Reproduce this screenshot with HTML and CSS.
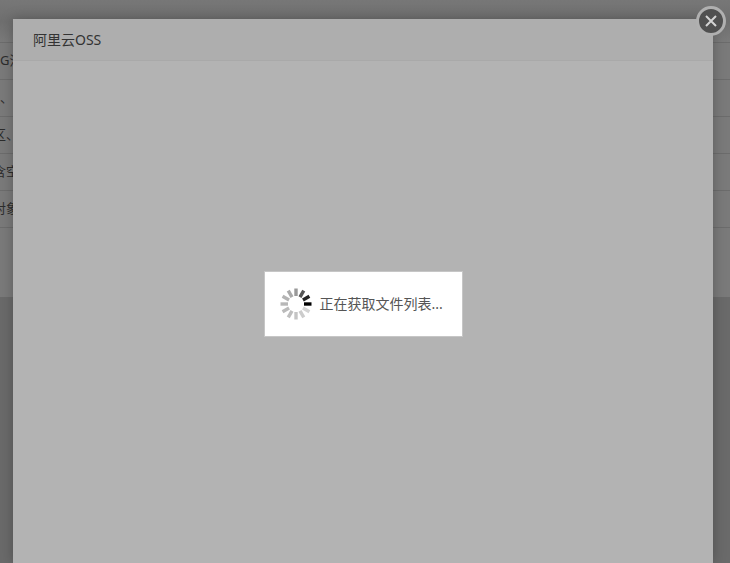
FILE: index.html
```html
<!DOCTYPE html>
<html lang="zh">
<head>
<meta charset="utf-8">
<title>阿里云OSS</title>
<link rel="stylesheet" href="styles.css">
</head>
<body>
<div class="backdrop">
  <div class="page-top">
    <div class="page-band"></div>
    <div class="page-row"><span>G流</span></div>
    <div class="page-row"><span>、</span></div>
    <div class="page-row"><span class="cut">区、</span></div>
    <div class="page-row"><span class="cut">含空</span></div>
    <div class="page-row"><span class="cut">对象</span></div>
  </div>
  <div class="page-bottom"></div>
</div>
<section class="modal">
  <header class="modal-head">阿里云OSS</header>
  <div class="modal-body">
    <div class="loader">
      <svg class="spinner" width="32" height="32" viewBox="0 0 32 32" aria-hidden="true">
        <g stroke-width="3.4" fill="none">
          <line x1="16" y1="0.5" x2="16" y2="8" stroke="#999" transform="rotate(0 16 16)"/>
          <line x1="16" y1="0.5" x2="16" y2="8" stroke="#555" transform="rotate(30 16 16)"/>
          <line x1="16" y1="0.5" x2="16" y2="8" stroke="#222" transform="rotate(60 16 16)"/>
          <line x1="16" y1="0.5" x2="16" y2="8" stroke="#000" transform="rotate(90 16 16)"/>
          <line x1="16" y1="0.5" x2="16" y2="8" stroke="#d4d4d4" transform="rotate(120 16 16)"/>
          <line x1="16" y1="0.5" x2="16" y2="8" stroke="#ccc" transform="rotate(150 16 16)"/>
          <line x1="16" y1="0.5" x2="16" y2="8" stroke="#c4c4c4" transform="rotate(180 16 16)"/>
          <line x1="16" y1="0.5" x2="16" y2="8" stroke="#bebebe" transform="rotate(210 16 16)"/>
          <line x1="16" y1="0.5" x2="16" y2="8" stroke="#bbb" transform="rotate(240 16 16)"/>
          <line x1="16" y1="0.5" x2="16" y2="8" stroke="#b8b8b8" transform="rotate(270 16 16)"/>
          <line x1="16" y1="0.5" x2="16" y2="8" stroke="#b4b4b4" transform="rotate(300 16 16)"/>
          <line x1="16" y1="0.5" x2="16" y2="8" stroke="#aaa" transform="rotate(330 16 16)"/>
        </g>
      </svg>
      <span class="loader-text">正在获取文件列表...</span>
    </div>
  </div>
</section>
<button class="close" type="button" aria-label="关闭">
  <svg width="14" height="14" viewBox="0 0 14 14" aria-hidden="true"><path d="M2 2 12 12M12 2 2 12" stroke="#d4d4d4" stroke-width="2" fill="none"/></svg>
</button>
</body>
</html>
```

FILE: styles.css
```css
* { box-sizing: border-box; }
html, body { margin: 0; height: 100%; overflow: hidden; }
body {
  position: relative;
  width: 730px;
  height: 563px;
  background: #666;
  font-family: "Noto Sans", "Noto Sans CJK SC", sans-serif;
  color: #333;
}
.backdrop { position: absolute; inset: 0; display: flex; flex-direction: column; }
.page-top { height: 297px; background: #7a7a7a; overflow: hidden; }
.page-bottom { flex: 1; background: #6a6a6a; }
.page-band { height: 43px; background: linear-gradient(#777, #6f6f6f 50%, #7a7a7a); border-bottom: 1px solid #6c6c6c; }
.page-row {
  height: 37px;
  border-bottom: 1px solid #6c6c6c;
  font-size: 13px;
  color: #2c2c2c;
  display: flex;
  align-items: center;
  padding-bottom: 3px;
  white-space: nowrap;
}
.cut { margin-left: -7px; }
.modal {
  position: absolute;
  left: 13px;
  top: 19px;
  width: 700px;
  height: 544px;
  background: #b3b3b3;
  box-shadow: 0 0 12px rgba(0, 0, 0, 0.25);
  display: flex;
  flex-direction: column;
}
.modal-head {
  height: 42px;
  padding: 0 0 2px 20px;
  display: flex;
  align-items: center;
  font-size: 14px;
  color: #333;
  background: #aeaeae;
  border-bottom: 1px solid #a9a9a9;
}
.modal-body { flex: 1; display: flex; justify-content: center; padding-top: 210px; }
.loader {
  width: 199px;
  height: 66px;
  background: #fff;
  border: 1px solid #c6c6c6;
  display: flex;
  align-items: center;
  padding-left: 15px;
  gap: 8px;
}
.spinner { flex: none; }
.loader-text { font-size: 14px; color: #555; white-space: nowrap; padding-bottom: 2px; }
.close {
  position: absolute;
  left: 696px;
  top: 6px;
  width: 30px;
  height: 30px;
  padding: 0;
  border: 3px solid #b0b0b0;
  border-radius: 50%;
  background: #505050;
  display: flex;
  align-items: center;
  justify-content: center;
}
```
